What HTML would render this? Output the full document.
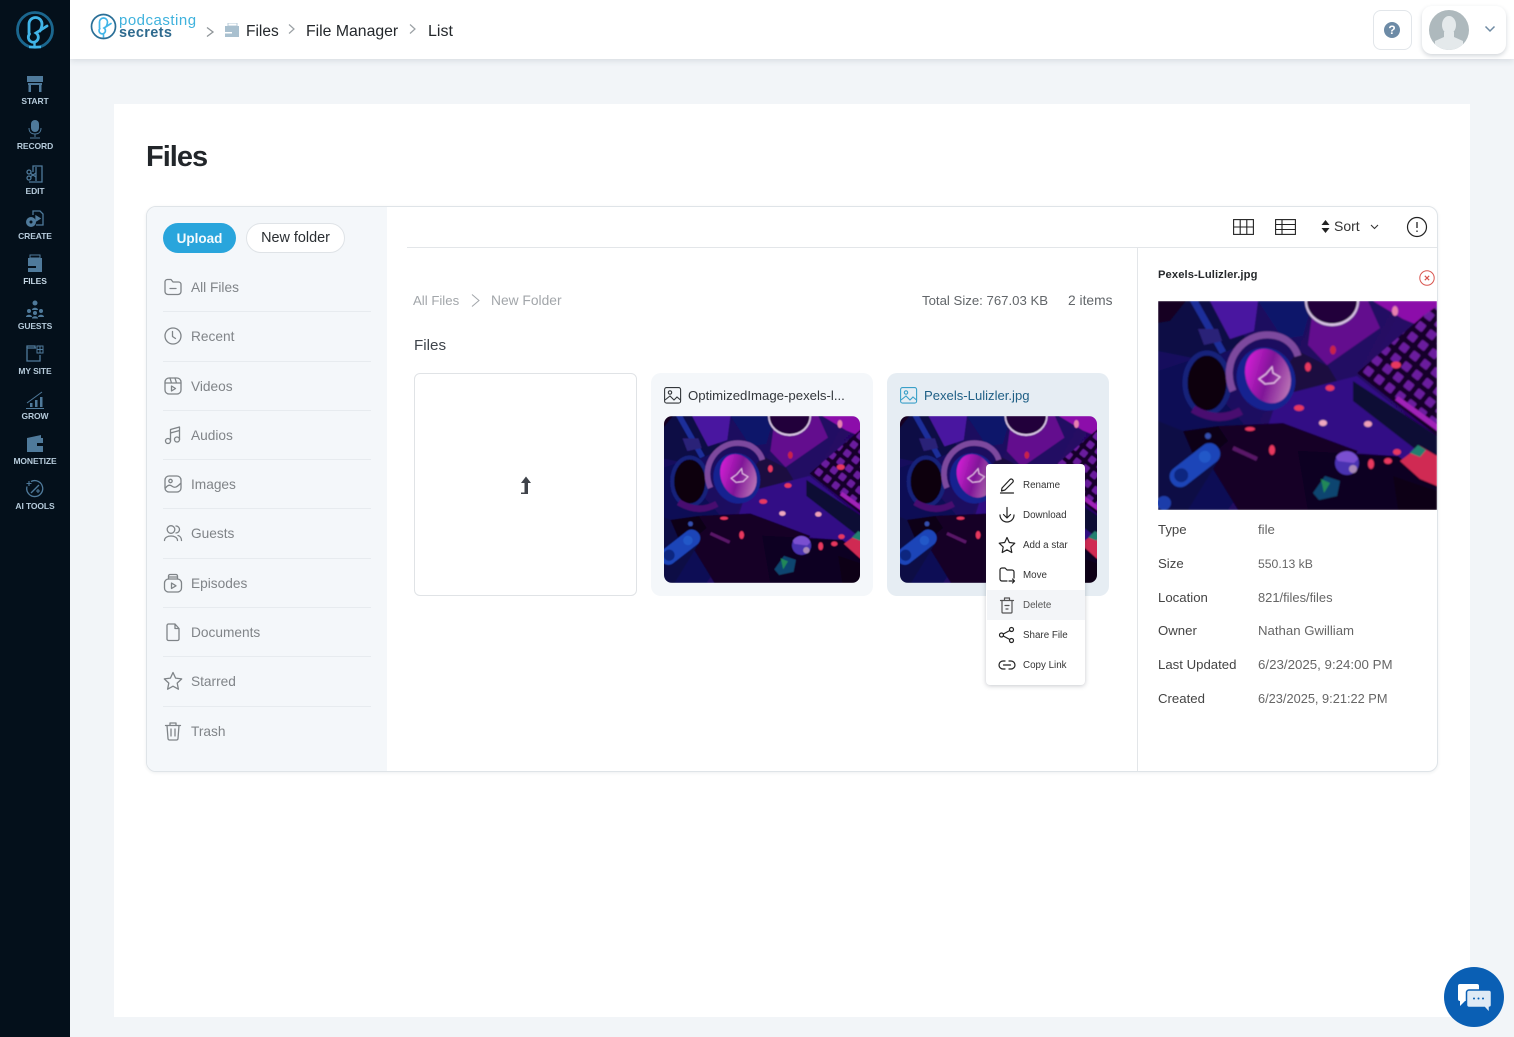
<!DOCTYPE html>
<html lang="en">
<head>
<meta charset="utf-8">
<title>Files</title>
<style>
html,body{margin:0;padding:0}
body{width:1514px;height:1037px;overflow:hidden;position:relative;background:#f2f5f8;font-family:"Liberation Sans",sans-serif}
.a{position:absolute}
.t{position:absolute;white-space:nowrap;line-height:20px;height:20px}
.side{position:absolute;left:0;top:0;width:70px;height:1037px;background:#04101b}
.sl{position:absolute;left:0;width:70px;text-align:center;font-size:8.5px;font-weight:700;line-height:11px;color:#b6cbdb;letter-spacing:-.1px;margin-top:1px}
.si{position:absolute;left:25px;width:20px;height:20px;color:#4f7a9b}
.nav{color:#808488;font-size:13.7px;left:191px;margin-top:1px}
.div{position:absolute;left:163px;width:208px;height:1px;background:#e7ebef}
.ni{position:absolute;left:163px;width:20px;height:20px;color:#7f8488;fill:none;stroke:currentColor;stroke-width:1.3;stroke-linecap:round;stroke-linejoin:round}
.lab{left:1158px;font-size:13.2px;color:#444}
.val{left:1258px;font-size:13.2px;color:#666}
.mt{left:1023px;font-size:9.8px;color:#333;margin-top:1px}
.mi{position:absolute;left:998px;width:18px;height:18px;fill:none;stroke:#222;stroke-width:1.2;stroke-linecap:round;stroke-linejoin:round}
svg{display:block}
</style>
</head>
<body>
<svg width="0" height="0" style="position:absolute">
<defs>
<linearGradient id="bg" x1="0" y1="0" x2="1" y2="0.4"><stop offset="0" stop-color="#100c5c"/><stop offset=".5" stop-color="#1f0860"/><stop offset="1" stop-color="#2a0668"/></linearGradient>
<linearGradient id="cup" x1="0" y1="0" x2="1" y2="1"><stop offset="0" stop-color="#f020ea"/><stop offset=".5" stop-color="#801698"/><stop offset="1" stop-color="#d098c0"/></linearGradient>
<pattern id="keys" width="13.5" height="13.5" patternUnits="userSpaceOnUse" patternTransform="rotate(38)"><rect width="13.5" height="13.5" fill="#14062a"/><rect x="2.500" y="2.500" width="8.500" height="8.500" rx="1.500" fill="#6a1a9e"/></pattern>
<filter id="soft" x="0" y="0" width="100%" height="100%"><feGaussianBlur stdDeviation=".8"/></filter>
<g id="photo">
<g filter="url(#soft)">
<rect width="279" height="209" fill="url(#bg)"/>
<polygon points="0,0 60,0 90,40 50,60 0,50" fill="#0e0b45"/>
<polygon points="0,0 28,0 12,20 0,22" fill="#120620"/>
<polygon points="52,0 100,0 96,30 72,38" fill="#4a18a0"/>
<polygon points="100,0 155,0 145,35 125,38" fill="#10146a"/>
<polygon points="32,0 40,0 68,50 62,53" fill="#1a2f9a"/>
<polygon points="40,28 60,28 64,40 46,44" fill="#2c2078"/>
<polygon points="215,0 279,0 279,32 245,18" fill="#8c0eaa"/>
<polygon points="156,0 210,0 222,27 169,64 150,44" fill="#640e8e"/>
<polygon points="140,50 170,65 185,90 140,100 125,70" fill="#1a0840"/>
<polygon points="0,70 30,60 110,150 70,209 0,209" fill="#0d0c55"/>
<polygon points="120,95 199,75 279,140 279,170 235,155 180,150 110,125" fill="#320c85"/>
<polygon points="195,80 279,135 279,165 195,100" fill="#0c0735"/>
<polygon points="60,125 125,122 200,150 150,209 80,209 50,160" fill="#120426"/>
<polygon points="140,150 240,155 279,185 279,209 150,209" fill="#080320"/>
<polygon points="0,120 25,130 60,160 30,209 0,209" fill="#0b0845"/>
<polygon points="25,130 60,125 70,140 40,165" fill="#100418"/>
<polygon points="279,5 265,15 199,72 279,135" fill="url(#keys)"/>
<polygon points="240,95 279,123 279,130 237,99" fill="#a020b8"/>
<ellipse cx="49" cy="82" rx="22" ry="30" fill="#080410" stroke="#14217a" stroke-width="5"/>
<path d="M35 108q25 15 48 2" stroke="#4a1070" stroke-width="8" fill="none"/>
<path d="M75 90C62 60 85 32 112 34 128 35 137 45 140 55" fill="none" stroke="#7d4a9e" stroke-width="7"/>
<ellipse cx="108" cy="78" rx="29" ry="32" fill="#162490" transform="rotate(-22 108 78)"/>
<ellipse cx="110" cy="75" rx="22" ry="28" fill="url(#cup)" transform="rotate(-22 110 75)"/>
<path d="M101 78l7-5 6-7 1 6 7 4-6 6-9 1z" fill="none" stroke="#f0c8ee" stroke-width="1.200"/>
<path d="M147 0a27 25 0 0 0 54 0z" fill="#d8c4e4"/>
<path d="M149 0a25 22.500 0 0 0 50 0z" fill="#22053a"/>
<g fill="#e8385f">
<ellipse cx="175" cy="49" rx="3" ry="4.500" fill="#c8244a"/><ellipse cx="150" cy="66" rx="3" ry="4.500"/><ellipse cx="172" cy="87" rx="4.500" ry="3"/><ellipse cx="141" cy="107" rx="5" ry="3"/><ellipse cx="92" cy="128" rx="5" ry="2"/><ellipse cx="114" cy="149" rx="3" ry="5"/><ellipse cx="213" cy="163" rx="3" ry="5"/><ellipse cx="230" cy="160" rx="4" ry="3"/><ellipse cx="239" cy="151" rx="4" ry="3"/><ellipse cx="238" cy="64" rx="5" ry="3.500"/>
<ellipse cx="237" cy="10" rx="3" ry="5" fill="#e880b0"/><ellipse cx="165" cy="122" rx="4" ry="3" fill="#f0a8c0"/><ellipse cx="210" cy="123" rx="4" ry="3" fill="#f0a0b8"/>
</g>
<g transform="rotate(-38 35 165)"><rect x="8" y="155" width="58" height="21" rx="10" fill="#1a44b8"/><circle cx="20" cy="165" r="7" fill="#0e2580"/><circle cx="50" cy="165" r="6" fill="#2358c8"/></g>
<circle cx="6" cy="202" r="7" fill="#1a3caa"/><circle cx="50" cy="135" r="3" fill="#3650b0"/>
<path d="M75 147l24 11" stroke="#5a1568" stroke-width="4"/>
<circle cx="189" cy="162" r="12" fill="#4a30b0"/><path d="M178 156a12 11 0 0 1 22 2l-4 4-16-2z" fill="#7a50d0"/><circle cx="195" cy="168" r="4" fill="#a888b8"/>
<path d="M155 192l12-17 15 5-3 15-18 4z" fill="#0f4570"/><path d="M163 178l9 4-6 10z" fill="#208858"/>
<polygon points="242,160 262,145 279,155 279,185 262,178" fill="#d02c52"/>
<polygon points="252,152 260,144 268,149 262,156" fill="#208070"/>
<polygon points="235,175 279,190 279,209 240,209" fill="#0e0318"/>
</g>
</g>
</defs>
</svg>

<div class="a" style="left:70px;top:0;width:1444px;height:59px;background:#fff;box-shadow:0 2px 6px rgba(30,50,70,.12)"></div>
<div class="a" style="left:114px;top:104px;width:1356px;height:913px;background:#fff"></div>

<!-- Sidebar -->
<div class="side"></div>
<svg class="a" style="left:14px;top:9px" width="42" height="42" viewBox="0 0 42 42" fill="none"><circle cx="21" cy="21" r="17.500" stroke="#1b678f" stroke-width="2.800"/><path d="M15 24V15a6.500 6.500 0 0 1 13 0c0 3-1 5-2 7" stroke="#41b5e8" stroke-width="2.800" stroke-linecap="round"/><path d="M33 17L22 24a5 5 0 1 1-6.500 1" stroke="#41b5e8" stroke-width="2.800" stroke-linecap="round"/><path d="M20.500 33v4M15 38h12" stroke="#41b5e8" stroke-width="2.400"/></svg>

<svg class="si" style="top:74px" viewBox="0 0 20 20"><rect x="2" y="2" width="16" height="6" fill="#4f7a9b"/><rect x="3" y="9" width="14" height="2" fill="#4f7a9b"/><rect x="3.500" y="11" width="2.500" height="7" fill="#4f7a9b"/><rect x="14" y="11" width="2.500" height="7" fill="#4f7a9b"/></svg>
<div class="sl" style="top:95px">START</div>
<svg class="si" style="top:119px" viewBox="0 0 20 20" fill="none"><rect x="6" y="1" width="8" height="12" rx="4" fill="#4f7a9b"/><path d="M4 9c0 4 2.500 6 6 6s6-2 6-6M10 15v3M5 19h10" stroke="#4f7a9b" stroke-width="1"/></svg>
<div class="sl" style="top:140px">RECORD</div>
<svg class="si" style="top:164px" viewBox="0 0 20 20" fill="none" stroke="#4f7a9b" stroke-width="1.300"><path d="M8 8V2h9v16H4"/><path d="M11 3v14"/><circle cx="4" cy="8" r="2"/><circle cx="4" cy="14" r="2"/><path d="M5 9l6 4M5 13l6-4"/></svg>
<div class="sl" style="top:185px">EDIT</div>
<svg class="si" style="top:209px" viewBox="0 0 20 20" fill="none" stroke="#4f7a9b" stroke-width="1.300"><path d="M8 6V2h7l3 3v11H11"/><path d="M11 7l4 2.500-4 2.500z" fill="#4f7a9b"/><circle cx="6" cy="13" r="5" fill="#4f7a9b" stroke="none"/><circle cx="6" cy="13" r="1.500" fill="#04101b" stroke="none"/></svg>
<div class="sl" style="top:230px">CREATE</div>
<svg class="si" style="top:254px" viewBox="0 0 20 20"><path d="M5 1h10v3H5z" fill="none" stroke="#4f7a9b"/><path d="M3 4h14v14H3z" fill="#4f7a9b"/><rect x="3" y="12" width="8" height="2" fill="#04101b"/></svg>
<div class="sl" style="top:275px;color:#c6d8e6">FILES</div>
<svg class="si" style="top:299px" viewBox="0 0 20 20" fill="#4f7a9b"><circle cx="10" cy="4" r="2.500"/><path d="M7 11c0-3 6-3 6 0z"/><circle cx="4" cy="12" r="2"/><circle cx="16" cy="12" r="2"/><circle cx="10" cy="14" r="2"/><path d="M1 18c0-3 6-3 6 0zM13 18c0-3 6-3 6 0zM7 19.500c0-3 6-3 6 0z"/></svg>
<div class="sl" style="top:320px">GUESTS</div>
<svg class="si" style="top:344px" viewBox="0 0 20 20" fill="none" stroke="#4f7a9b" stroke-width="1.300"><path d="M11 4H2v13h13v-6"/><path d="M2 4V2h8v2"/><path d="M12 2h6v7h-6zM15 2v7M12 5.500h6" stroke-width="1"/></svg>
<div class="sl" style="top:365px">MY SITE</div>
<svg class="si" style="top:389px" viewBox="0 0 20 20" fill="#4f7a9b"><rect x="5" y="14" width="2.500" height="4"/><rect x="10" y="11" width="2.500" height="7"/><rect x="15" y="8" width="2.500" height="10"/><rect x="1" y="19" width="18" height="1"/><path d="M2 14L17 3" stroke="#4f7a9b" fill="none"/></svg>
<div class="sl" style="top:410px">GROW</div>
<svg class="si" style="top:434px" viewBox="0 0 20 20" fill="#4f7a9b"><path d="M2 4l14-3v3h2v14H2z"/><rect x="12" y="9" width="6" height="3" fill="#04101b"/></svg>
<div class="sl" style="top:455px">MONETIZE</div>
<svg class="si" style="top:479px" viewBox="0 0 20 20" fill="none" stroke="#4f7a9b" stroke-width="1.300"><path d="M6 2.500a8 8 0 1 1-4 5"/><path d="M6 14L14 6"/><path d="M4 2v5M1.500 4.500h5M13 10v4M11 12h4" stroke-width="1.100"/></svg>
<div class="sl" style="top:500px">AI TOOLS</div>

<!-- Top bar -->
<svg class="a" style="left:90px;top:13px" width="27" height="27" viewBox="0 0 27 27" fill="none"><circle cx="13.500" cy="13.500" r="12" stroke="#2a6f97" stroke-width="1.700"/><path d="M9.500 15V9a4 4 0 0 1 8 0c0 2-.7 3.300-1.300 4.500" stroke="#41b5e8" stroke-width="1.700" stroke-linecap="round"/><path d="M21 10.500l-7 4.500a3.200 3.200 0 1 1-4.200.6" stroke="#41b5e8" stroke-width="1.700" stroke-linecap="round"/><path d="M13.500 20.500v4" stroke="#41b5e8" stroke-width="1.600"/></svg>
<div class="t" style="left:119px;top:11px;font-size:15px;letter-spacing:.5px;color:#3fb2dd">podcasting</div>
<div class="t" style="left:119px;top:23px;font-size:14.500px;letter-spacing:.35px;color:#2e6a8e;font-weight:700">secrets</div>
<svg class="a" style="left:205px;top:26px" width="10" height="12" viewBox="0 0 10 12" fill="none" stroke="#8f9599" stroke-width="1.300"><path d="M2 1.500L8 6 2 10.500"/></svg>
<svg class="a" style="left:225px;top:23px" width="14" height="14" viewBox="0 0 14 14"><path d="M3 0h9v3H3z" fill="none" stroke="#b7cbd8"/><path d="M0 3h14v11H0z" fill="#a9c0cf"/><rect y="9" width="7" height="1.500" fill="#fff"/></svg>
<div class="t" style="left:246px;top:22px;font-size:15.500px;color:#23272b">Files</div>
<svg class="a" style="left:287px;top:23px" width="9" height="12" viewBox="0 0 9 12" fill="none" stroke="#9aa0a4" stroke-width="1.200"><path d="M2 1.500L7 6 2 10.500"/></svg>
<div class="t" style="left:306px;top:22px;font-size:15.800px;color:#23272b">File Manager</div>
<svg class="a" style="left:408px;top:23px" width="9" height="12" viewBox="0 0 9 12" fill="none" stroke="#9aa0a4" stroke-width="1.200"><path d="M2 1.500L7 6 2 10.500"/></svg>
<div class="t" style="left:428px;top:22px;font-size:16px;color:#23272b">List</div>

<div class="a" style="left:1373px;top:10px;width:37px;height:38px;background:#fff;border:1px solid #e2e6ea;border-radius:8px"></div>
<svg class="a" style="left:1383px;top:21px" width="18" height="18" viewBox="0 0 18 18"><circle cx="9" cy="9" r="8" fill="#6d8ba6"/><text x="9" y="13" font-family="Liberation Sans,sans-serif" font-size="12" font-weight="700" text-anchor="middle" fill="#fff">?</text></svg>
<div class="a" style="left:1422px;top:6px;width:84px;height:48px;background:#fff;border-radius:10px;box-shadow:0 2px 5px rgba(30,50,70,.2)"></div>
<svg class="a" style="left:1429px;top:10px" width="40" height="40" viewBox="0 0 40 40"><defs><clipPath id="av"><circle cx="20" cy="20" r="20"/></clipPath></defs><circle cx="20" cy="20" r="20" fill="#aeb9bd"/><g clip-path="url(#av)" fill="#e4e9eb"><ellipse cx="20" cy="15" rx="7" ry="9"/><path d="M15 22h10v5l9 4v9H6v-9l9-4z"/></g></svg>
<svg class="a" style="left:1484px;top:25px" width="12" height="8" viewBox="0 0 12 8" fill="none" stroke="#6f8ba3" stroke-width="1.500"><path d="M1.500 1.500L6 6l4.500-4.500"/></svg>

<!-- Title -->
<div class="t" style="left:146px;top:142px;font-size:29px;line-height:30px;height:30px;font-weight:700;color:#22262a;letter-spacing:-1px">Files</div>

<!-- Main box -->
<div class="a" style="left:146px;top:206px;width:1290px;height:564px;background:#fff;border:1px solid #dfe4e8;border-radius:10px;box-shadow:0 1px 3px rgba(30,50,70,.08);overflow:hidden">
  <div class="a" style="left:0;top:0;width:240px;height:565px;background:#f4f7fa"></div>
</div>

<div class="a" style="left:163px;top:223px;width:73px;height:30px;border-radius:15px;background:#29a5dc"></div>
<div class="t" style="left:163px;top:229px;width:73px;text-align:center;font-size:13.500px;font-weight:700;color:#fff;opacity:.95">Upload</div>
<div class="a" style="left:246px;top:223px;width:97px;height:28px;border-radius:15px;background:#fff;border:1px solid #dfe3e7"></div>
<div class="t" style="left:246px;top:228px;width:99px;text-align:center;font-size:14.400px;color:#2a2e32">New folder</div>

<!-- Left nav -->
<svg class="ni" style="top:277px" viewBox="0 0 20 20"><path d="M2 5a2.500 2.500 0 0 1 2.500-2.500H8l2 2.500h5.500A2.500 2.500 0 0 1 18 7.500v7a3 3 0 0 1-3 3H5a3 3 0 0 1-3-3zM7 11.500h6"/></svg>
<div class="t nav" style="top:277px">All Files</div><div class="div" style="top:311px"></div>
<svg class="ni" style="top:326px" viewBox="0 0 20 20"><circle cx="10" cy="10" r="8"/><path d="M9.500 5.500v5l3 2"/></svg>
<div class="t nav" style="top:326px">Recent</div><div class="div" style="top:361px"></div>
<svg class="ni" style="top:376px" viewBox="0 0 20 20"><rect x="2" y="2" width="16" height="16" rx="4"/><path d="M2 7h16M7 2l1.500 5M12 2l1.500 5"/><path d="M8.500 10v5l4-2.500z"/></svg>
<div class="t nav" style="top:376px">Videos</div><div class="div" style="top:410px"></div>
<svg class="ni" style="top:425px" viewBox="0 0 20 20"><circle cx="5" cy="16" r="2.500"/><circle cx="14" cy="14.500" r="2.500"/><path d="M7.500 16V4.500L16.500 2v12.500M7.500 8l9-2.500"/></svg>
<div class="t nav" style="top:425px">Audios</div><div class="div" style="top:459px"></div>
<svg class="ni" style="top:474px" viewBox="0 0 20 20"><rect x="2" y="2" width="16" height="16" rx="4"/><circle cx="7.500" cy="7" r="1.700"/><path d="M2.500 14c3-4 5-3 7-1.500s4 1 8-3"/></svg>
<div class="t nav" style="top:474px">Images</div><div class="div" style="top:508px"></div>
<svg class="ni" style="top:523px" viewBox="0 0 20 20"><circle cx="8" cy="6.500" r="3.800"/><path d="M1.500 17.500c0-6 13-6 13 0M13 3a3.500 3.500 0 0 1 0 7M15 12.500c2 .5 3.500 2.500 3.500 5"/></svg>
<div class="t nav" style="top:523px">Guests</div><div class="div" style="top:558px"></div>
<svg class="ni" style="top:573px" viewBox="0 0 20 20"><rect x="1.500" y="6" width="17" height="13" rx="4"/><path d="M5.500 6V3a1.500 1.500 0 0 1 1.500-1.500h6A1.500 1.500 0 0 1 14.500 3v3M5.500 4h9M8.500 10v5.500l4.500-2.700z"/></svg>
<div class="t nav" style="top:573px">Episodes</div><div class="div" style="top:607px"></div>
<svg class="ni" style="top:622px" viewBox="0 0 20 20"><path d="M4 3.500A1.500 1.500 0 0 1 5.500 2H12l4 4.500V17a1.500 1.500 0 0 1-1.500 1.500h-9A1.500 1.500 0 0 1 4 17zM12 2v4.500h4"/></svg>
<div class="t nav" style="top:622px">Documents</div><div class="div" style="top:656px"></div>
<svg class="ni" style="top:671px" viewBox="0 0 20 20"><path d="M10 1.500l2.600 5.600 6.100.8-4.500 4.200 1.200 6.100L10 15.200l-5.400 3 1.200-6.100L1.300 7.900l6.100-.8z"/></svg>
<div class="t nav" style="top:671px">Starred</div><div class="div" style="top:706px"></div>
<svg class="ni" style="top:721px" viewBox="0 0 20 20"><path d="M2.500 4.500h15M7 4.500V2h6v2.500M4 4.500l1 13a1.500 1.500 0 0 0 1.500 1.500h7a1.500 1.500 0 0 0 1.500-1.500l1-13M8 8v7M12 8v7"/></svg>
<div class="t nav" style="top:721px">Trash</div>

<!-- Toolbar -->
<div class="a" style="left:407px;top:247px;width:1030px;height:1px;background:#e3e6e9"></div>
<div class="a" style="left:1137px;top:248px;width:1px;height:523px;background:#e3e6e9"></div>
<svg class="a" style="left:1233px;top:219px" width="21" height="16" viewBox="0 0 21 16" fill="none" stroke="#222" stroke-width="1.100"><rect x=".6" y=".6" width="19.800" height="14.800"/><path d="M7.200.6v14.800M13.800.6v14.800M.6 8h19.800"/></svg>
<svg class="a" style="left:1275px;top:219px" width="21" height="16" viewBox="0 0 21 16" fill="none" stroke="#222" stroke-width="1.100"><rect x=".6" y=".6" width="19.800" height="14.800"/><path d="M.6 5.500h19.800M.6 10.500h19.800M7 .6v14.800"/></svg>
<svg class="a" style="left:1321px;top:220px" width="9" height="13" viewBox="0 0 9 13" fill="#222"><path d="M4.500 0L8.500 5H.5zM4.500 13L.5 8h8z"/></svg>
<div class="t" style="left:1334px;top:216px;font-size:14px;color:#333">Sort</div>
<svg class="a" style="left:1370px;top:224px" width="9" height="6" viewBox="0 0 9 6" fill="none" stroke="#333" stroke-width="1.100"><path d="M1 1l3.500 3.500L8 1"/></svg>
<svg class="a" style="left:1406px;top:216px" width="22" height="22" viewBox="0 0 22 22" fill="none"><circle cx="11" cy="11" r="9.500" stroke="#222" stroke-width="1.200"/><path d="M11 6v6M11 14.500v1.500" stroke="#222" stroke-width="1.300"/></svg>

<!-- Content -->
<div class="t" style="left:413px;top:291px;font-size:13.200px;color:#a2a6aa">All Files</div>
<svg class="a" style="left:470px;top:293px" width="11" height="15" viewBox="0 0 11 15" fill="none" stroke="#a2a6aa" stroke-width="1"><path d="M2 1.500l7 6-7 6"/></svg>
<div class="t" style="left:491px;top:291px;font-size:13.800px;color:#a2a6aa">New Folder</div>
<div class="t" style="left:922px;top:291px;font-size:13.200px;color:#62666a">Total Size: 767.03 KB</div>
<div class="t" style="left:1068px;top:291px;font-size:13.800px;color:#62666a">2 items</div>
<div class="t" style="left:414px;top:336px;font-size:15.200px;color:#3f454c">Files</div>

<div class="a" style="left:414px;top:373px;width:221px;height:221px;background:#fff;border:1px solid #e0e3e6;border-radius:6px"></div>
<svg class="a" style="left:519px;top:476px" width="14" height="20" viewBox="0 0 14 20" fill="#3f434a"><path d="M7 .5L12 7H9v11H2v-1.500h3.500V7H2z"/></svg>

<div class="a" style="left:651px;top:373px;width:222px;height:223px;background:#f4f7fa;border-radius:10px"></div>
<svg class="a" style="left:664px;top:387px" width="18" height="17" viewBox="0 0 18 17" fill="none" stroke="#33373b" stroke-width="1.100"><rect x=".6" y=".6" width="16" height="15.500" rx="2"/><circle cx="6" cy="5.500" r="1.700"/><path d="M1 13l5-4 4 4 3-3 3.500 3"/></svg>
<div class="t" style="left:688px;top:386px;font-size:13.200px;color:#33373b">OptimizedImage-pexels-l...</div>
<svg class="a" style="left:664px;top:416px;border-radius:8px" width="196" height="167" viewBox="0 0 279 209" preserveAspectRatio="xMidYMid slice"><use href="#photo"/></svg>

<div class="a" style="left:887px;top:373px;width:222px;height:223px;background:#e6edf3;border-radius:10px"></div>
<svg class="a" style="left:900px;top:387px" width="18" height="17" viewBox="0 0 18 17" fill="none" stroke="#3aa0c8" stroke-width="1.100"><rect x=".6" y=".6" width="16" height="15.500" rx="2"/><circle cx="6" cy="5.500" r="1.700"/><path d="M1 13l5-4 4 4 3-3 3.500 3"/></svg>
<div class="t" style="left:924px;top:386px;font-size:13.100px;color:#1f5f85">Pexels-Lulizler.jpg</div>
<svg class="a" style="left:900px;top:416px;border-radius:8px" width="197" height="167" viewBox="0 0 279 209" preserveAspectRatio="xMidYMid slice"><use href="#photo"/></svg>

<!-- Menu -->
<div class="a" style="left:986px;top:464px;width:99px;height:221px;background:#fff;border-radius:4px;box-shadow:0 1px 5px rgba(30,40,60,.25)"></div>
<div class="a" style="left:987px;top:590px;width:98px;height:30px;background:#f3f5f8"></div>
<svg class="mi" style="top:476px" viewBox="0 0 18 18"><path d="M4 12L12 3.500a2 2 0 0 1 3 2.500L7 14l-3.500 1zM2.500 17h13"/></svg>
<div class="t mt" style="top:475px">Rename</div>
<svg class="mi" style="top:506px" viewBox="0 0 18 18"><path d="M9 1.500v10M5.500 8.500L9 12l3.500-3.500M2 9a7 7 0 0 0 14 0"/></svg>
<div class="t mt" style="top:505px">Download</div>
<svg class="mi" style="top:536px" viewBox="0 0 18 18"><path d="M9 1.500l2.300 5 5.500.7-4 3.800 1 5.500L9 13.800l-4.800 2.700 1-5.500-4-3.800 5.500-.7z"/></svg>
<div class="t mt" style="top:535px">Add a star</div>
<svg class="mi" style="top:566px" viewBox="0 0 18 18"><path d="M9 15H4a2 2 0 0 1-2-2V4a2 2 0 0 1 2-2h3l2 2h5a2 2 0 0 1 2 2v6M11 15h5.500M14.500 13l2 2-2 2"/></svg>
<div class="t mt" style="top:565px">Move</div>
<svg class="mi" style="top:596px;stroke:#555" viewBox="0 0 18 18"><path d="M2.500 4.500h13M6.500 4.500V2h5v2.500M4 4.500V16a1 1 0 0 0 1 1h8a1 1 0 0 0 1-1V4.500M7 9.500h4M8 13h2"/></svg>
<div class="t mt" style="top:595px;color:#555">Delete</div>
<svg class="mi" style="top:626px" viewBox="0 0 18 18"><circle cx="3.500" cy="9" r="2"/><circle cx="13.500" cy="3.500" r="2"/><circle cx="13.500" cy="14.500" r="2"/><path d="M5.300 8l6.500-3.500M5.300 10l6.500 3.500"/></svg>
<div class="t mt" style="top:625px">Share File</div>
<svg class="mi" style="top:656px" viewBox="0 0 18 18"><path d="M7 5H5a4 4 0 0 0 0 8h2M11 5h2a4 4 0 0 1 0 8h-2M5.500 9h7"/></svg>
<div class="t mt" style="top:655px">Copy Link</div>

<!-- Details -->
<div class="t" style="left:1158px;top:265px;font-size:11.200px;font-weight:700;color:#26292c;letter-spacing:.1px">Pexels-Lulizler.jpg</div>
<svg class="a" style="left:1419px;top:270px" width="16" height="16" viewBox="0 0 16 16" fill="none" stroke="#d8554f"><circle cx="8" cy="8" r="7.200" stroke-width="1"/><path d="M5.800 5.800l4.400 4.400M10.200 5.800l-4.400 4.400" stroke-width="1.200"/></svg>
<svg class="a" style="left:1158px;top:301px" width="279" height="209" viewBox="0 0 279 209"><use href="#photo"/></svg>
<div class="t lab" style="top:520px">Type</div><div class="t val" style="top:520px">file</div>
<div class="t lab" style="top:554px">Size</div><div class="t val" style="top:554px;font-size:12.200px">550.13 kB</div>
<div class="t lab" style="top:588px">Location</div><div class="t val" style="top:588px;font-size:12.900px">821/files/files</div>
<div class="t lab" style="top:621px">Owner</div><div class="t val" style="top:621px">Nathan Gwilliam</div>
<div class="t lab" style="top:655px">Last Updated</div><div class="t val" style="top:655px;font-size:13.300px">6/23/2025, 9:24:00 PM</div>
<div class="t lab" style="top:689px">Created</div><div class="t val" style="top:689px;font-size:12.800px">6/23/2025, 9:21:22 PM</div>

<!-- Chat -->
<div class="a" style="left:1444px;top:967px;width:60px;height:60px;border-radius:50%;background:#0a5fb4"></div>
<svg class="a" style="left:1458px;top:984px" width="34" height="30" viewBox="0 0 34 30"><path d="M2 0h17a2 2 0 0 1 2 2v13a2 2 0 0 1-2 2H7l-5 5V17a2 2 0 0 1-2-2V2a2 2 0 0 1 2-2z" fill="#fff"/><path d="M11 6h20a2.500 2.500 0 0 1 2.500 2.500V21a2.500 2.500 0 0 1-2 2.400V29l-5-5.500H11A2.500 2.500 0 0 1 8.500 21V8.500A2.500 2.500 0 0 1 11 6z" fill="#dfeaf5" stroke="#0a5fb4" stroke-width="1.500"/><circle cx="16" cy="14.500" r="1" fill="#0a5fb4"/><circle cx="20.500" cy="14.500" r="1" fill="#0a5fb4"/><circle cx="25" cy="14.500" r="1" fill="#0a5fb4"/></svg>
</body>
</html>
